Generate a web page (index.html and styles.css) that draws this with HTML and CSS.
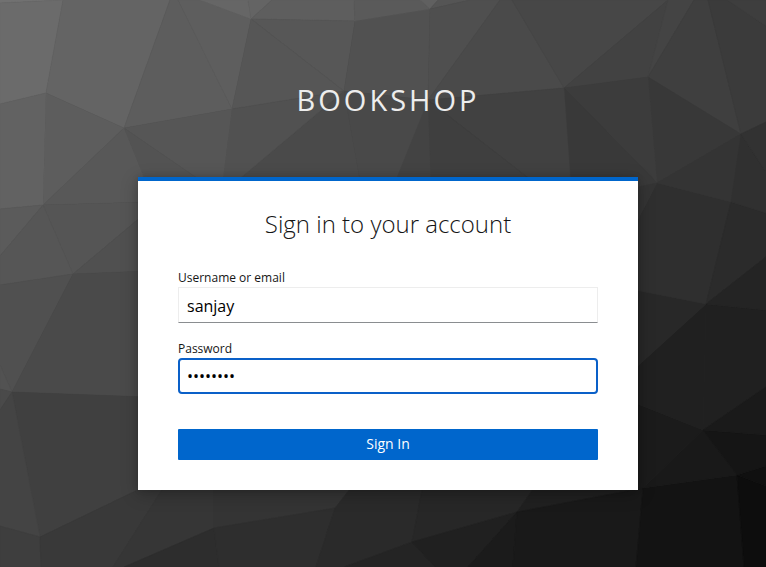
FILE: index.html
```
<!DOCTYPE html>
<html lang="en">
<head>
<meta charset="utf-8">
<title>Sign in to Bookshop</title>
<link rel="stylesheet" href="styles.css">
</head>
<body>
<svg class="backdrop" viewBox="0 0 766 567" preserveAspectRatio="none" aria-hidden="true">
<polygon color="#717171" points="0,0 63,0 0,3"/>
<polygon color="#6b6b6b" points="0,3 63,0 46,93 0,104"/>
<polygon color="#646464" points="63,0 170,0 124,128 46,93"/>
<polygon color="#5d5d5d" points="170,0 178,0 232,109 124,128"/>
<polygon color="#5e5e5e" points="178,0 200,0 251,19 232,109"/>
<polygon color="#666666" points="200,0 248,0 251,19"/>
<polygon color="#646464" points="248,0 272,0 251,19"/>
<polygon color="#5e5e5e" points="272,0 354,0 355,21 251,19"/>
<polygon color="#575757" points="251,19 355,21 344,91"/>
<polygon color="#565656" points="251,19 344,91 232,109"/>
<polygon color="#515151" points="355,21 430,9 428,100 344,91"/>
<polygon color="#5a5a5a" points="354,0 420,0 430,9 355,21"/>
<polygon color="#606060" points="420,0 438,0 430,9"/>
<polygon color="#555555" points="438,0 470,0 430,9"/>
<polygon color="#4f4f4f" points="430,9 470,0 500,0 428,100"/>
<polygon color="#4a4a4a" points="500,0 512,0 564,88 428,100"/>
<polygon color="#474747" points="512,0 668,0 564,88"/>
<polygon color="#424242" points="668,0 648,77 564,88"/>
<polygon color="#444444" points="668,0 694,0 648,77"/>
<polygon color="#3f3f3f" points="694,0 708,0 741,134 648,77"/>
<polygon color="#3b3b3b" points="708,0 727,0 766,26 766,122 741,134"/>
<polygon color="#3e3e3e" points="727,0 766,0 766,26"/>
<polygon color="#383838" points="648,77 741,134 657,183"/>
<polygon color="#3c3c3c" points="564,88 648,77 657,183"/>
<polygon color="#393939" points="564,88 657,183 638,187 571,187"/>
<polygon color="#414141" points="428,100 564,88 571,187 540,187"/>
<polygon color="#3f3f3f" points="428,100 540,187 431,187"/>
<polygon color="#434343" points="428,100 431,187 393,187"/>
<polygon color="#494949" points="344,91 428,100 393,187 361,187"/>
<polygon color="#4a4a4a" points="344,91 361,187 230,187"/>
<polygon color="#515151" points="232,109 344,91 230,187 222,187"/>
<polygon color="#565656" points="124,128 232,109 222,187 210,187"/>
<polygon color="#535353" points="124,128 210,187 148,187"/>
<polygon color="#5d5d5d" points="46,93 124,128 43,205"/>
<polygon color="#626262" points="0,104 46,93 43,205 0,209"/>
<polygon color="#585858" points="43,205 124,128 148,187 148,202"/>
<polygon color="#5b5b5b" points="0,209 43,205 0,256"/>
<polygon color="#555555" points="43,205 148,202 148,211 73,274"/>
<polygon color="#565656" points="0,256 43,205 73,274 0,285"/>
<polygon color="#505050" points="73,274 148,211 148,271"/>
<polygon color="#505050" points="0,285 73,274 12,392 0,365"/>
<polygon color="#525252" points="0,365 12,392 0,389"/>
<polygon color="#4a4a4a" points="73,274 148,271 148,397 12,392"/>
<polygon color="#404040" points="12,392 148,397 148,485 40,537"/>
<polygon color="#4a4a4a" points="0,389 12,392 0,410"/>
<polygon color="#444444" points="0,410 12,392 40,537 0,526"/>
<polygon color="#3e3e3e" points="0,526 40,537 41,567 0,567"/>
<polygon color="#393939" points="40,537 148,485 165,485 113,567 41,567"/>
<polygon color="#363636" points="165,485 214,485 214,528 124,567 113,567"/>
<polygon color="#343434" points="214,485 353,485 335,508 214,528"/>
<polygon color="#2d2d2d" points="124,567 214,528 219,567"/>
<polygon color="#2e2e2e" points="214,528 335,508 316,567 219,567"/>
<polygon color="#2a2a2a" points="335,508 353,485 423,485 412,542 344,567 316,567"/>
<polygon color="#272727" points="412,542 423,485 536,485 517,512"/>
<polygon color="#242424" points="344,567 412,542 435,567"/>
<polygon color="#202020" points="412,542 517,512 468,567 435,567"/>
<polygon color="#1b1b1b" points="517,512 513,567 468,567"/>
<polygon color="#202020" points="517,512 536,485 643,485 643,488"/>
<polygon color="#191919" points="517,512 643,488 636,567 513,567"/>
<polygon color="#131313" points="643,488 737,475 744,567 636,567"/>
<polygon color="#0d0d0d" points="737,475 766,486 766,567 744,567"/>
<polygon color="#101010" points="737,475 766,466 766,486"/>
<polygon color="#191919" points="643,488 703,430 737,475"/>
<polygon color="#151515" points="703,430 766,435 766,466 737,475"/>
<polygon color="#1b1b1b" points="630,401 703,430 643,488 630,488"/>
<polygon color="#202020" points="706,304 703,430 630,401 630,373"/>
<polygon color="#202020" points="706,304 766,310 766,387 703,430"/>
<polygon color="#1a1a1a" points="766,387 766,435 703,430"/>
<polygon color="#282828" points="630,289 706,304 630,373"/>
<polygon color="#2f2f2f" points="657,183 731,202 706,304 630,289 630,235"/>
<polygon color="#2b2b2b" points="731,202 766,213 766,257 706,304"/>
<polygon color="#242424" points="766,257 766,310 706,304"/>
<polygon color="#343434" points="657,183 741,134 731,202"/>
<polygon color="#303030" points="741,134 766,172 766,213 731,202"/>
<polygon color="#323232" points="741,134 766,122 766,172"/>
<polygon color="#343434" points="630,189 657,183 630,235"/>
</svg>
<div class="login">
  <header class="brand">BOOKSHOP</header>
  <main class="card">
    <h1 class="title">Sign in to your account</h1>
    <form class="form">
      <label class="label" for="username">Username or email</label>
      <input class="input" id="username" type="text" value="sanjay">
      <label class="label" for="password">Password</label>
      <input class="input input-focused" id="password" type="password" value="password">
      <button class="submit" type="button">Sign In</button>
    </form>
  </main>
</div>
</body>
</html>
```
FILE: styles.css
```
* { box-sizing: border-box; }
body {
  margin: 0;
  height: 567px;
  overflow: hidden;
  background: #3a3a3a;
  font-family: "Open Sans", "Noto Sans", sans-serif;
  color: #151515;
}
.backdrop {
  position: absolute;
  inset: 0;
  width: 100%;
  height: 100%;
}
.backdrop polygon {
  fill: currentColor;
  stroke: currentColor;
  stroke-width: 0.5;
}
.login {
  position: relative;
  width: 500px;
  margin-left: 138px;
}
.brand {
  height: 177px;
  padding-top: 80px;
  font-size: 29px;
  line-height: 40px;
  letter-spacing: 3px;
  text-align: center;
  color: #ededed;
}
.card {
  height: 313px;
  padding: 0 40px;
  border-top: 4px solid #06c;
  background: #fff;
  box-shadow: 0 4px 16px rgba(3, 3, 3, 0.25), 0 0 6px rgba(3, 3, 3, 0.12);
}
.title {
  margin: 0;
  padding-top: 26px;
  font-size: 24px;
  font-weight: 300;
  line-height: 34px;
  text-align: center;
}
.form {
  display: flex;
  flex-direction: column;
  padding-top: 27px;
}
.label {
  font-size: 12px;
  line-height: 18px;
  padding-top: 1px;
}
.input {
  height: 36px;
  margin: 0 0 16px;
  padding: 1px 8px 0;
  border: 1px solid #ededed;
  border-bottom-color: #8a8d90;
  border-radius: 0;
  outline: none;
  background: #fff;
  font: 16px "Open Sans", "Noto Sans", sans-serif;
  color: #000;
}
.input-focused {
  margin-bottom: 35px;
  padding: 0 7px;
  border: 2px solid #0a60c8;
  border-radius: 4px;
}
.submit {
  height: 31px;
  padding: 0 0 2px;
  border: 0;
  border-radius: 1px;
  background: #06c;
  font: 14px "Open Sans", "Noto Sans", sans-serif;
  color: #fff;
}
```
